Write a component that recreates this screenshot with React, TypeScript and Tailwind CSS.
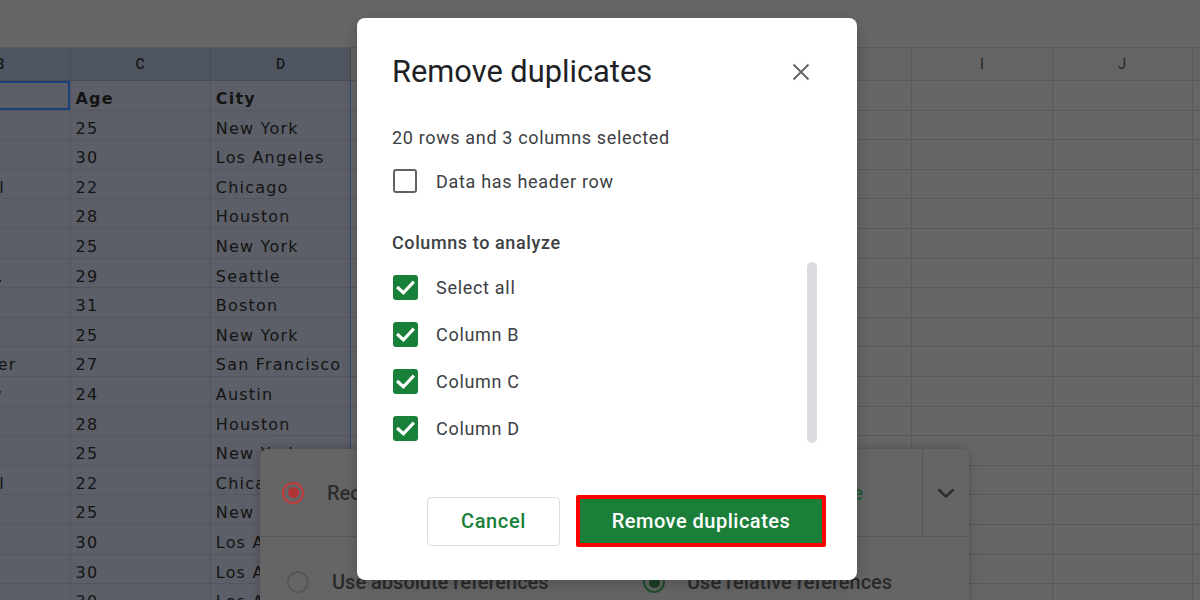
import React from 'react';

const COLS = ['B', 'C', 'D', 'E', 'F', 'G', 'H', 'I', 'J', 'K'];

const ROWS: [string, string, string][] = [
  ['Name', 'Age', 'City'],
  ['John', '25', 'New York'],
  ['Sarah', '30', 'Los Angeles'],
  ['Michael', '22', 'Chicago'],
  ['Emma', '28', 'Houston'],
  ['John', '25', 'New York'],
  ['Emily J.', '29', 'Seattle'],
  ['David', '31', 'Boston'],
  ['John', '25', 'New York'],
  ['Schroder', '27', 'San Francisco'],
  ['Andrew', '24', 'Austin'],
  ['Emma', '28', 'Houston'],
  ['John', '25', 'New York'],
  ['Michael', '22', 'Chicago'],
  ['John', '25', 'New York'],
  ['Sarah', '30', 'Los Angeles'],
  ['Sarah', '30', 'Los Angeles'],
  ['Sarah', '30', 'Los Angeles'],
];

function HeaderRow() {
  return (
    <div className="flex ml-[-69.8px] h-[33px]">
      {COLS.map((c, i) => {
        const sel = i < 3;
        return (
          <div
            key={c}
            className={
              'w-[140.3px] shrink-0 h-full border-r border-b flex items-center justify-center pt-[1px] text-[14px] font-[Roboto,sans-serif] ' +
              (sel
                ? 'bg-[#4f5561] border-[#474c55] text-[#161616] font-medium'
                : 'bg-[#646464] border-[#585858] text-[#222222]')
            }
          >
            {c}
          </div>
        );
      })}
    </div>
  );
}

function DataRow({ row, idx }: { row: [string, string, string]; idx: number }) {
  return (
    <div className="flex ml-[-69.8px] h-[29.6px]">
      {COLS.map((c, i) => {
        const sel = i < 3;
        const text = sel ? row[i] : '';
        const active = idx === 0 && i === 0;
        let cls =
          'relative w-[140.3px] shrink-0 h-full border-r border-b overflow-hidden whitespace-nowrap pl-[5px] pt-[6px] leading-[23.6px] text-[16px] tracking-[1.2px] text-[#141414] font-[DejaVu_Sans,sans-serif] ';
        if (sel) {
          cls += 'bg-[#5c5f67] border-b-[#53565d] ';
          cls += i === 2 ? 'border-r-[#2e4a78] ' : 'border-r-[#53565d] ';
        } else {
          cls += 'bg-[#666666] border-[#595959] ';
        }
        if (idx === 0 && sel) cls += 'font-bold ';
        return (
          <div key={c} className={cls}>
            {text}
            {active && (
              <div className="absolute inset-0 border-2 border-[#17427d] pointer-events-none" />
            )}
          </div>
        );
      })}
    </div>
  );
}

function Radio({ kind }: { kind: 'red' | 'empty' | 'green' }) {
  if (kind === 'empty') {
    return <div className="w-[22px] h-[22px] rounded-full border-[2.5px] border-[#575757] shrink-0" />;
  }
  const ring = kind === 'red' ? 'border-[#c23b3b]' : 'border-[#1d4d2c]';
  const dot = kind === 'red' ? 'bg-[#b23535]' : 'bg-[#1a3f26]';
  return (
    <div className={'w-[22px] h-[22px] rounded-full border-[2.5px] flex items-center justify-center shrink-0 ' + ring}>
      <div className={'w-[11px] h-[11px] rounded-full ' + dot} />
    </div>
  );
}

function CheckedBox() {
  return (
    <div className="w-[25px] h-[25px] rounded-[3px] bg-[#188038] flex items-center justify-center shrink-0">
      <svg width="25" height="25" viewBox="0 0 24 24">
        <path d="M5 12.5 L10 17 L19 7.5" stroke="white" strokeWidth="3" fill="none" strokeLinecap="square" />
      </svg>
    </div>
  );
}

export default function App() {
  return (
    <div className="relative w-[1200px] h-[600px] overflow-hidden bg-[#666666]">
      <div className="h-[48px] border-b border-[#595959] bg-[#666666]" />
      <HeaderRow />
      {ROWS.map((r, i) => (
        <DataRow key={i} row={r} idx={i} />
      ))}

      {/* card behind the dialog */}
      <div className="absolute left-[260px] top-[449px] w-[709px] h-[180px] rounded-[8px] bg-[#656565] shadow-[0_0_10px_rgba(0,0,0,0.25)] font-[Roboto,sans-serif]">
        <div className="flex h-[88px] border-b border-[#575757]">
          <div className="flex-1 flex items-center pl-[22px] gap-[23px]">
            <Radio kind="red" />
            <span className="text-[20px] font-medium text-[#2e2e2e]">Recommended</span>
            <span className="ml-auto pr-[59px] text-[20px] font-medium text-[#1f5a30]">Save</span>
          </div>
          <div className="w-[47px] border-l border-[#575757] flex items-center justify-center">
            <svg width="18" height="10" viewBox="0 0 18 10">
              <polyline points="1.5,1.5 9,8.5 16.5,1.5" fill="none" stroke="#2d2d2d" strokeWidth="2.5" />
            </svg>
          </div>
        </div>
        <div className="flex items-center h-[90px]">
          <div className="w-[383px] flex items-center pl-[27px] gap-[23px]">
            <Radio kind="empty" />
            <span className="text-[20px] font-medium text-[#2a2a2a]">Use absolute references</span>
          </div>
          <div className="flex items-center gap-[22px]">
            <Radio kind="green" />
            <span className="text-[20px] font-medium text-[#2a2a2a]">Use relative references</span>
          </div>
        </div>
      </div>

      {/* dialog */}
      <div className="absolute left-[357px] top-[18px] w-[500px] h-[562px] rounded-[8px] bg-white flex flex-col font-[Roboto,sans-serif] shadow-[0_4px_16px_rgba(0,0,0,0.2)]">
        <div className="flex items-center justify-between pl-[35px] pr-[44px] pt-[36px]">
          <h2 className="text-[30.8px] leading-[36px] text-[#202124] font-normal">Remove duplicates</h2>
          <svg width="24" height="24" viewBox="0 0 24 24">
            <path d="M4.5 4.5 L19.5 19.5 M19.5 4.5 L4.5 19.5" stroke="#5f6368" strokeWidth="1.8" fill="none" />
          </svg>
        </div>
        <div className="pl-[35px] mt-[36px] text-[18px] leading-[24px] tracking-[0.65px] text-[#3c4043]">
          20 rows and 3 columns selected
        </div>
        <div className="pl-[36px] mt-[18px] flex items-center gap-[19px]">
          <div className="w-[24px] h-[24px] rounded-[3px] border-[2.5px] border-[#5f6368] shrink-0" />
          <span className="text-[18px] leading-[24px] tracking-[0.7px] text-[#3c4043] pt-[2px]">Data has header row</span>
        </div>
        <div className="pl-[35px] mt-[37px] text-[18px] leading-[24px] tracking-[0.6px] font-medium text-[#3c4043]">
          Columns to analyze
        </div>
        <div className="mt-[7px] h-[181px] flex pl-[36px] pr-[40px]">
          <div className="flex-1 pt-[13px] flex flex-col gap-[22px]">
            {['Select all', 'Column B', 'Column C', 'Column D'].map((t) => (
              <div key={t} className="flex items-center gap-[18px] h-[25px]">
                <CheckedBox />
                <span className="text-[18px] leading-[24px] tracking-[0.7px] text-[#3c4043] pt-[1px]">{t}</span>
              </div>
            ))}
          </div>
          <div className="w-[10px] h-full rounded-full bg-[#dadce0]" />
        </div>
        <div className="mt-auto flex justify-end items-center gap-[16px] pr-[31px] pb-[33px]">
          <button className="w-[133px] h-[49px] border border-[#dadce0] rounded-[4px] text-[#188038] text-[20px] tracking-[0.6px] font-medium bg-white">
            Cancel
          </button>
          <button className="w-[250px] h-[52px] border-[4px] border-[#ff0000] rounded-[2px] bg-[#1b7f3a] text-white text-[20px] tracking-[0.5px] font-medium">
            Remove duplicates
          </button>
        </div>
      </div>
    </div>
  );
}
